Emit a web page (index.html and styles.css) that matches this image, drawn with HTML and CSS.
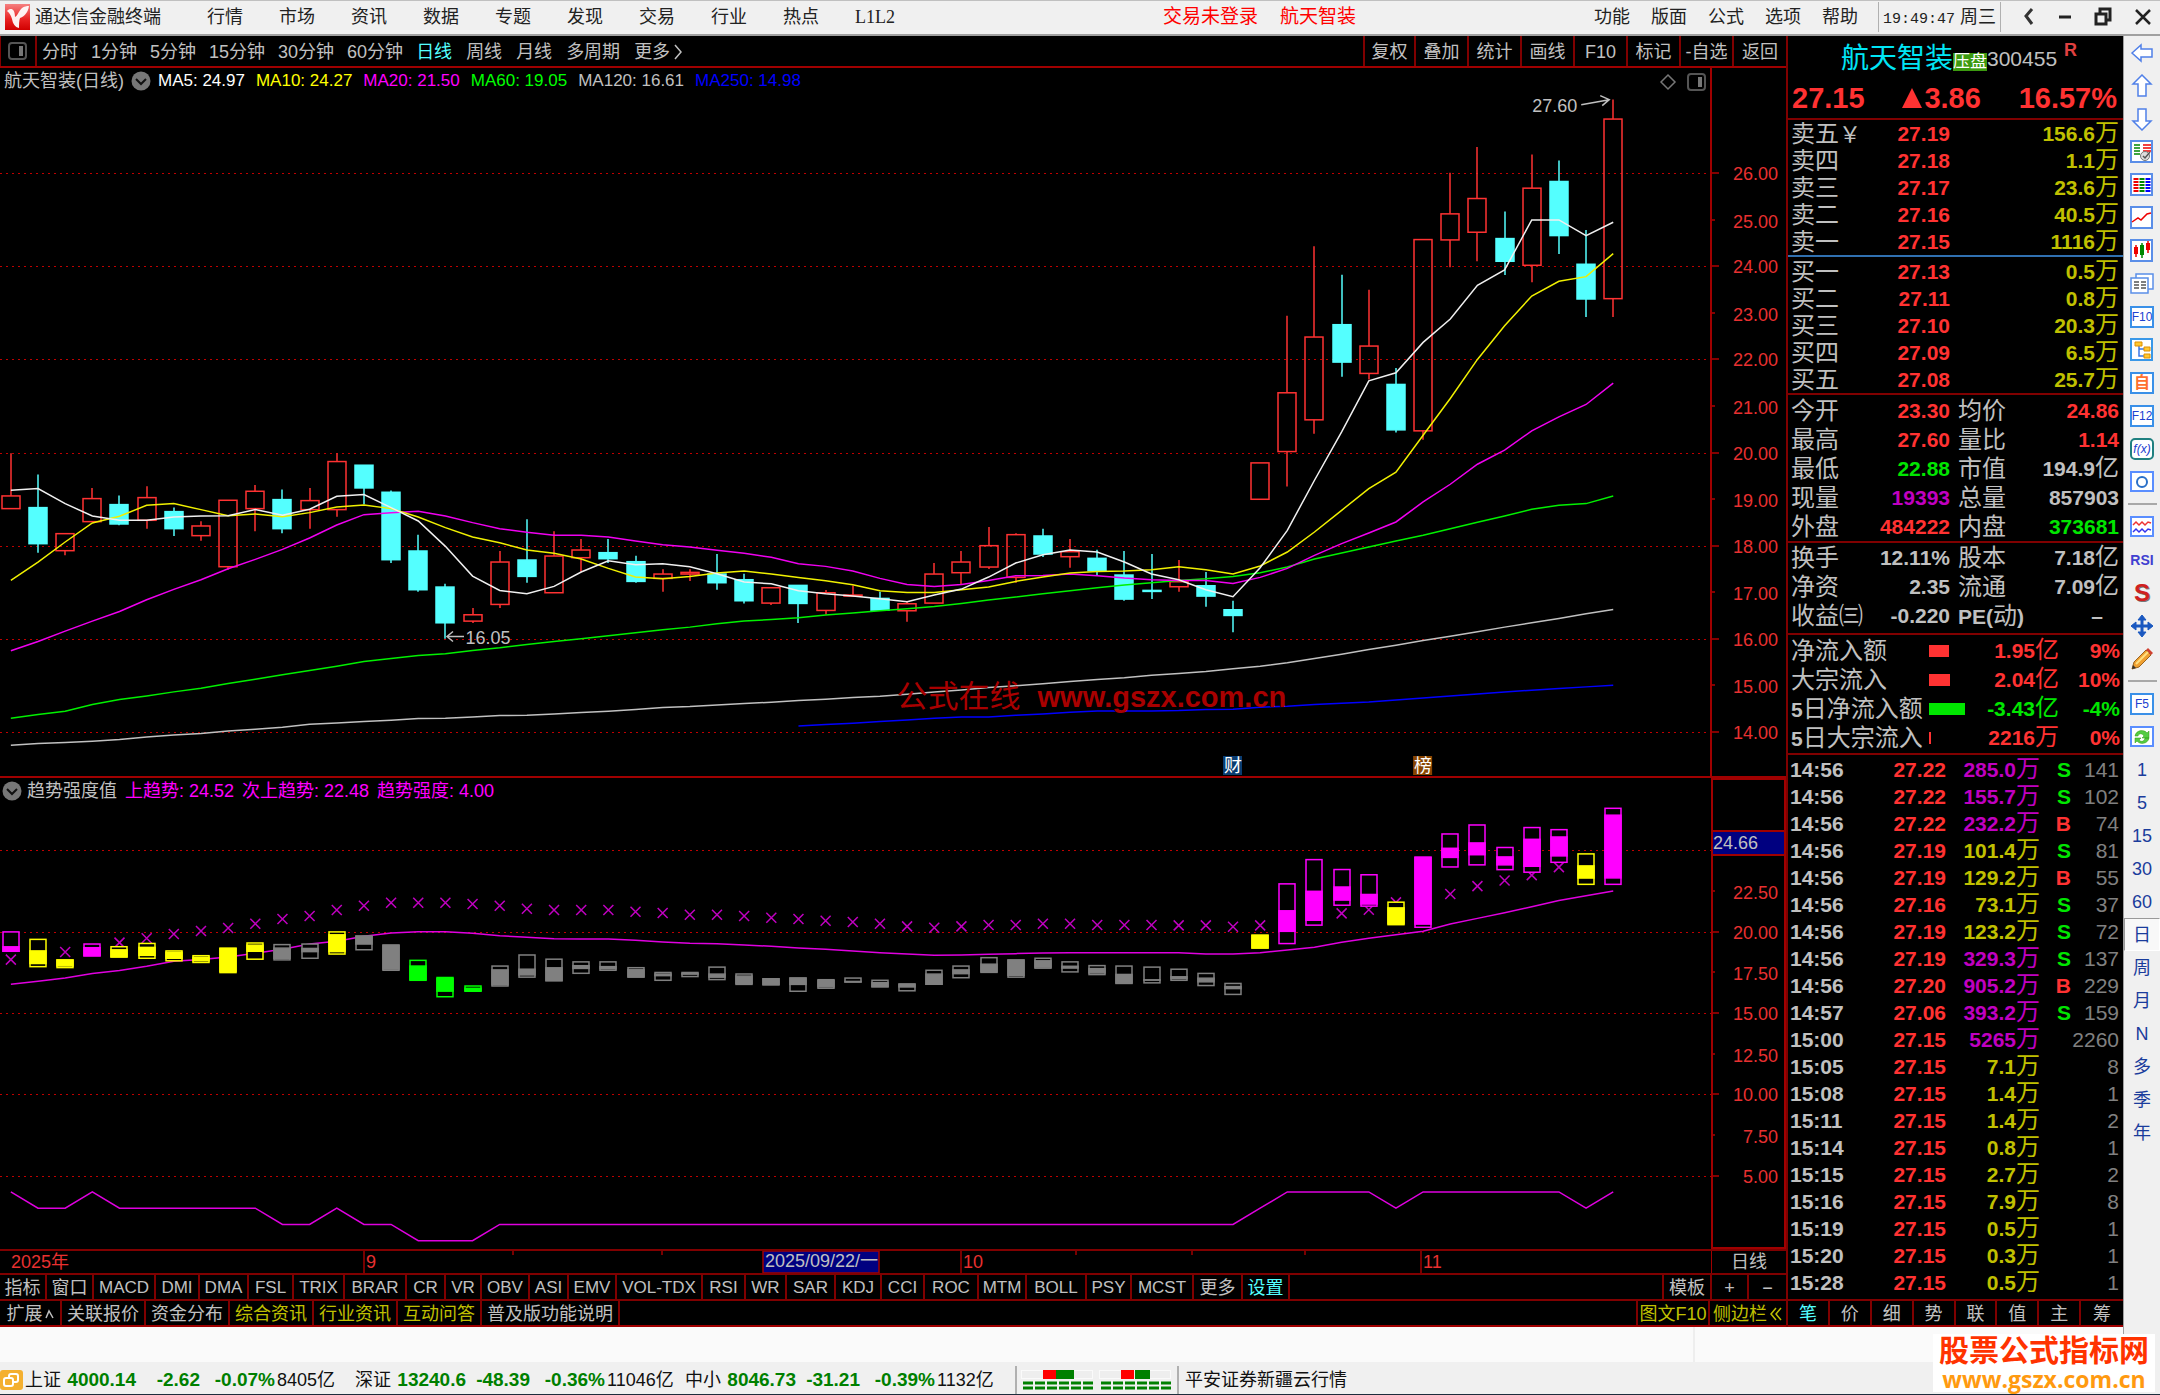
FILE: index.html
```html
<!DOCTYPE html>
<html lang="zh-CN">
<head>
<meta charset="utf-8">
<title>通达信金融终端</title>
<link rel="stylesheet" href="styles.css">
</head>
<body>
<header class="titlebar">
  <svg class="brand" viewBox="0 0 25 26" width="25" height="26"><defs><linearGradient id="lg" x1="0" y1="0" x2="0" y2="1"><stop offset="0" stop-color="#f58080"/><stop offset=".6" stop-color="#e82020"/><stop offset="1" stop-color="#d00000"/></linearGradient></defs><rect width="25" height="26" fill="url(#lg)"/><path d="M2 7c4-4 8-2 8 6 2-1 3-4 6-8 3-3 6-3 8-3-1 6-4 10-9 12-1 3-1 6-1 10-4-1-6-4-7-9C6 12 5 9 2 7z" fill="#fff" fill-opacity=".93"/></svg>
  <strong class="app-name">通达信金融终端</strong>
  <nav class="menu"><a href="#">行情</a><a href="#">市场</a><a href="#">资讯</a><a href="#">数据</a><a href="#">专题</a><a href="#">发现</a><a href="#">交易</a><a href="#">行业</a><a href="#">热点</a><a href="#">L1L2</a></nav>
  <div class="login"><a href="#">交易未登录</a><a href="#">航天智装</a></div>
  <nav class="menu tools"><a href="#">功能</a><a href="#">版面</a><a href="#">公式</a><a href="#">选项</a><a href="#">帮助</a></nav>
  <time class="clock"><span>19:49:47</span> 周三</time>
  <div class="window-buttons">
    <button aria-label="后退"><svg width="14" height="20"><path d="M10 2 4 9l6 8" fill="none" stroke="#333" stroke-width="3"/></svg></button>
    <button aria-label="最小化"><svg width="14" height="20"><path d="M1 10h12" stroke="#222" stroke-width="3"/></svg></button>
    <button aria-label="还原"><svg width="18" height="20"><path d="M6 6V2h10v11h-4M2 7h10v10H2z" fill="none" stroke="#222" stroke-width="3"/></svg></button>
    <button aria-label="关闭"><svg width="18" height="20"><path d="M2 3l14 14M16 3 2 17" stroke="#222" stroke-width="2.5"/></svg></button>
  </div>
</header>

<div class="stage">
<div class="desk-column">
<div class="desk">
<main class="charts">
  <div class="toolbar">
    <button class="panel-toggle" aria-label="侧栏"><svg width="20" height="18"><rect x="1" y="1" width="17" height="16" rx="3" fill="none" stroke="#555" stroke-width="2"/><rect x="11" y="4" width="4" height="10" fill="#777"/></svg></button>
    <nav class="minutes"><a href="#">分时</a><a href="#">1分钟</a><a href="#">5分钟</a><a href="#">15分钟</a><a href="#">30分钟</a><a href="#">60分钟</a></nav>
    <nav class="periods"><a href="#" class="on">日线</a><a href="#">周线</a><a href="#">月线</a><a href="#">多周期</a><a href="#">更多<svg width="10" height="18"><path d="M2 2l6 7-6 7" fill="none" stroke="#c0c0c0" stroke-width="1.5"/></svg></a></nav>
    <div class="actions"><button>复权</button><button>叠加</button><button>统计</button><button>画线</button><button>F10</button><button>标记</button><button>-自选</button><button>返回</button></div>
  </div>

  <section class="pane price-pane">
    <svg id="price-chart" class="plot"></svg>
    <div class="legend ma-legend">
      <span>航天智装(日线)</span>
      <svg width="20" height="20"><circle cx="10" cy="10" r="9.5" fill="#777"/><path d="M5 8l5 5 5-5" fill="none" stroke="#111" stroke-width="2"/></svg>
      <span class="ma white">MA5: 24.97</span><span class="ma yellow">MA10: 24.27</span><span class="ma magenta">MA20: 21.50</span><span class="ma green">MA60: 19.05</span><span class="ma">MA120: 16.61</span><span class="ma blue">MA250: 14.98</span>
    </div>
    <div class="corner"><svg width="18" height="18"><path d="M9 2l7 7-7 7-7-7z" fill="none" stroke="#777" stroke-width="1.5"/></svg><svg width="20" height="18"><rect x="1" y="1" width="17" height="16" rx="3" fill="none" stroke="#555" stroke-width="2"/><rect x="11" y="4" width="4" height="10" fill="#777"/></svg></div>
    <div class="watermark"><span>公式在线</span><b>www.gszx.com.cn</b></div>
  </section>

  <section class="pane trend-pane">
    <svg id="trend-chart" class="plot"></svg>
    <div class="legend trend-legend">
      <svg width="20" height="20"><circle cx="10" cy="10" r="9.5" fill="#777"/><path d="M5 8l5 5 5-5" fill="none" stroke="#111" stroke-width="2"/></svg>
      <span>趋势强度值</span><span class="magenta">上趋势: 24.52</span><span class="magenta">次上趋势: 22.48</span><span class="magenta">趋势强度: 4.00</span>
    </div>
    <div class="axis-box"><output>24.66</output></div>
  </section>

  <div class="date-axis"><svg id="dates"></svg><span>日线</span></div>

  <div class="tabs indicators">
    <div class="indicator-list"><button>指标</button><button>窗口</button><button>MACD</button><button>DMI</button><button>DMA</button><button>FSL</button><button>TRIX</button><button>BRAR</button><button>CR</button><button>VR</button><button>OBV</button><button>ASI</button><button>EMV</button><button>VOL-TDX</button><button>RSI</button><button>WR</button><button>SAR</button><button>KDJ</button><button>CCI</button><button>ROC</button><button>MTM</button><button>BOLL</button><button>PSY</button><button>MCST</button><button>更多</button><button class="cyan">设置</button></div>
    <div class="zoomers"><button>模板</button><button>+</button><button>−</button></div>
  </div>
  <div class="tabs extras">
    <div class="extra-list"><button>扩展<svg width="9" height="12"><path d="M1 10 4 3l4 7" fill="none" stroke="#c0c0c0" stroke-width="1.5"/></svg></button><button>关联报价</button><button>资金分布</button><button class="gold">综合资讯</button><button class="gold">行业资讯</button><button class="gold">互动问答</button><button>普及版功能说明</button></div>
    <div class="side-list"><button class="gold">图文F10</button><button class="gold">侧边栏<svg width="14" height="16"><path d="M7 2 2 8l5 6M12 2 7 8l5 6" fill="none" stroke="#c0c000" stroke-width="1.5"/></svg></button></div>
  </div>
</main>

<aside class="quote">
  <div class="quote-head">
    <h1><span class="stock">航天智装</span><span class="tag">压盘</span><span class="code">300455</span><sup>R</sup></h1>
    <div class="last"><span>27.15</span><span class="change"><svg width="21" height="20"><path d="M10 0l10 20H0z" fill="#ff3232"/></svg>3.86</span><span>16.57%</span></div>
  </div>
  <table class="book sell">
    <tr><th>卖五<i>￥</i></th><td class="up">27.19</td><td class="gold">156.6<i>万</i></td></tr>
    <tr><th>卖四</th><td class="up">27.18</td><td class="gold">1.1<i>万</i></td></tr>
    <tr><th>卖三</th><td class="up">27.17</td><td class="gold">23.6<i>万</i></td></tr>
    <tr><th>卖二</th><td class="up">27.16</td><td class="gold">40.5<i>万</i></td></tr>
    <tr><th>卖一</th><td class="up">27.15</td><td class="gold">1116<i>万</i></td></tr>
  </table>
  <table class="book buy">
    <tr><th>买一</th><td class="up">27.13</td><td class="gold">0.5<i>万</i></td></tr>
    <tr><th>买二</th><td class="up">27.11</td><td class="gold">0.8<i>万</i></td></tr>
    <tr><th>买三</th><td class="up">27.10</td><td class="gold">20.3<i>万</i></td></tr>
    <tr><th>买四</th><td class="up">27.09</td><td class="gold">6.5<i>万</i></td></tr>
    <tr><th>买五</th><td class="up">27.08</td><td class="gold">25.7<i>万</i></td></tr>
  </table>
  <table class="stats">
    <tr><th>今开</th><td class="up">23.30</td><th>均价</th><td class="up">24.86</td></tr>
    <tr><th>最高</th><td class="up">27.60</td><th>量比</th><td class="up">1.14</td></tr>
    <tr><th>最低</th><td class="down">22.88</td><th>市值</th><td>194.9<i>亿</i></td></tr>
    <tr><th>现量</th><td class="purple">19393</td><th>总量</th><td>857903</td></tr>
    <tr><th>外盘</th><td class="up">484222</td><th>内盘</th><td class="down">373681</td></tr>
  </table>
  <table class="stats ratios">
    <tr><th>换手</th><td>12.11%</td><th>股本</th><td>7.18<i>亿</i></td></tr>
    <tr><th>净资</th><td>2.35</td><th>流通</th><td>7.09<i>亿</i></td></tr>
    <tr><th>收益㈢</th><td>-0.220</td><th><b>PE(</b>动<b>)</b></th><td class="none">–</td></tr>
  </table>
  <table class="flows">
    <tr><th>净流入额</th><td><span class="bar" style="width:20px"></span></td><td class="up">1.95<i>亿</i></td><td class="up">9%</td></tr>
    <tr><th>大宗流入</th><td><span class="bar" style="width:21px"></span></td><td class="up">2.04<i>亿</i></td><td class="up">10%</td></tr>
    <tr><th><b>5</b>日净流入额</th><td><span class="bar out" style="width:36px"></span></td><td class="down">-3.43<i>亿</i></td><td class="down">-4%</td></tr>
    <tr><th><b>5</b>日大宗流入</th><td><span class="bar" style="width:2px"></span></td><td class="up">2216<i>万</i></td><td class="up">0%</td></tr>
  </table>
  <table class="ticks">
    <tr><td>14:56</td><td>27.22</td><td class="purple">285.0<i>万</i></td><td class="down">S</td><td>141</td></tr>
    <tr><td>14:56</td><td>27.22</td><td class="purple">155.7<i>万</i></td><td class="down">S</td><td>102</td></tr>
    <tr><td>14:56</td><td>27.22</td><td class="purple">232.2<i>万</i></td><td class="up">B</td><td>74</td></tr>
    <tr><td>14:56</td><td>27.19</td><td class="gold">101.4<i>万</i></td><td class="down">S</td><td>81</td></tr>
    <tr><td>14:56</td><td>27.19</td><td class="gold">129.2<i>万</i></td><td class="up">B</td><td>55</td></tr>
    <tr><td>14:56</td><td>27.16</td><td class="gold">73.1<i>万</i></td><td class="down">S</td><td>37</td></tr>
    <tr><td>14:56</td><td>27.19</td><td class="gold">123.2<i>万</i></td><td class="down">S</td><td>72</td></tr>
    <tr><td>14:56</td><td>27.19</td><td class="purple">329.3<i>万</i></td><td class="down">S</td><td>137</td></tr>
    <tr><td>14:56</td><td>27.20</td><td class="purple">905.2<i>万</i></td><td class="up">B</td><td>229</td></tr>
    <tr><td>14:57</td><td>27.06</td><td class="purple">393.2<i>万</i></td><td class="down">S</td><td>159</td></tr>
    <tr><td>15:00</td><td>27.15</td><td class="purple">5265<i>万</i></td><td></td><td>2260</td></tr>
    <tr><td>15:05</td><td>27.15</td><td class="gold">7.1<i>万</i></td><td></td><td>8</td></tr>
    <tr><td>15:08</td><td>27.15</td><td class="gold">1.4<i>万</i></td><td></td><td>1</td></tr>
    <tr><td>15:11</td><td>27.15</td><td class="gold">1.4<i>万</i></td><td></td><td>2</td></tr>
    <tr><td>15:14</td><td>27.15</td><td class="gold">0.8<i>万</i></td><td></td><td>1</td></tr>
    <tr><td>15:15</td><td>27.15</td><td class="gold">2.7<i>万</i></td><td></td><td>2</td></tr>
    <tr><td>15:16</td><td>27.15</td><td class="gold">7.9<i>万</i></td><td></td><td>8</td></tr>
    <tr><td>15:19</td><td>27.15</td><td class="gold">0.5<i>万</i></td><td></td><td>1</td></tr>
    <tr><td>15:20</td><td>27.15</td><td class="gold">0.3<i>万</i></td><td></td><td>1</td></tr>
    <tr><td>15:28</td><td>27.15</td><td class="gold">0.5<i>万</i></td><td></td><td>1</td></tr>
  </table>
  <div class="tabs quote-tabs"><button class="cyan">笔</button><button>价</button><button>细</button><button>势</button><button>联</button><button>值</button><button>主</button><button>筹</button></div>
</aside>
</div>
<div class="notice"><span></span></div>
</div>

<nav class="rail">
  <button aria-label="左"><svg viewBox="0 0 24 24"><path d="M2 12 11 4v4h11v8H11v4z" fill="#fff" stroke="#5080e8" stroke-width="1.5"/></svg></button>
  <button aria-label="上"><svg viewBox="0 0 24 24"><path d="M12 1l9 9h-5v12H8V10H3z" fill="#fff" stroke="#5080e8" stroke-width="1.5"/></svg></button>
  <button aria-label="下"><svg viewBox="0 0 24 24"><path d="M12 23l9-9h-5V2H8v12H3z" fill="#fff" stroke="#5080e8" stroke-width="1.5"/></svg></button>
  <button aria-label="报价"><svg viewBox="0 0 24 24"><rect x="1" y="1" width="21" height="21" fill="#fff" stroke="#5a8ee8" stroke-width="2"/><path d="M4 5h6M4 8h6M4 11h6M4 14h6" stroke="#080" stroke-width="1.5"/><path d="M13 5h8M13 8h8M13 11h8" stroke="#e00" stroke-width="1.5"/><circle cx="15" cy="16" r="4.5" fill="#ddd" stroke="#777"/><path d="M13 16l2 2 5-6" fill="none" stroke="#555" stroke-width="1.5"/></svg></button>
  <button aria-label="列表"><svg viewBox="0 0 24 24"><rect x="1" y="1" width="21" height="21" fill="#fff" stroke="#5a8ee8" stroke-width="2"/><g stroke-width="5" stroke-dasharray="2 1"><path d="M6 5v14" stroke="#e00"/><path d="M12 5v14" stroke="#080"/><path d="M18 5v14" stroke="#00f"/></g></svg></button>
  <button aria-label="走势"><svg viewBox="0 0 24 24"><rect x="1" y="1" width="21" height="21" fill="#fff" stroke="#5a8ee8" stroke-width="2"/><path d="M2 16l6-4 3 2 6-6 4-1" fill="none" stroke="#e00" stroke-width="1.5"/></svg></button>
  <button aria-label="K线"><svg viewBox="0 0 24 24"><rect x="1" y="1" width="21" height="21" fill="#fff" stroke="#5a8ee8" stroke-width="2"/><path d="M6 6v12M18 2v12" stroke="#e00" stroke-width="1.5"/><path d="M12 4v15" stroke="#080" stroke-width="1.5"/><path d="M4 8h4v7H4zM16 4h4v7h-4z" fill="#e00"/><path d="M10 6h4v10h-4z" fill="#080"/></svg></button>
  <button aria-label="资讯"><svg viewBox="0 0 24 24"><rect x="6" y="2" width="17" height="15" fill="#fff" stroke="#5a8ee8" stroke-width="1.5"/><rect x="1" y="6" width="17" height="15" fill="#fff" stroke="#5a8ee8" stroke-width="1.5"/><path d="M4 10h5M4 13h5M4 16h5M11 10h5M11 13h5M11 16h5" stroke="#555" stroke-width="1.5"/></svg></button>
  <button class="key"><span>F10</span></button>
  <button aria-label="板块"><svg viewBox="0 0 24 24"><rect x="1" y="1" width="21" height="21" fill="#fff" stroke="#3a98e8" stroke-width="2"/><path d="M9 7v11h5M9 11h5" fill="none" stroke="#3a78e8" stroke-width="1.5"/><path d="M5 4h7v4H5zM14 9h6v4h-6zM14 16h6v4h-6z" fill="#ffc830" stroke="#e09000"/></svg></button>
  <button class="key self"><span>自</span></button>
  <button class="key"><span>F12</span></button>
  <button class="key fx"><span>f(x)</span></button>
  <button aria-label="圆"><svg viewBox="0 0 24 24"><rect x="1" y="2" width="22" height="19" fill="#fff" stroke="#5a8eff" stroke-width="2"/><circle cx="12" cy="12" r="5" fill="none" stroke="#2a70c8" stroke-width="2"/></svg></button>
  <hr>
  <button aria-label="多指标"><svg viewBox="0 0 24 24"><rect x="1" y="2" width="22" height="19" fill="#fff" stroke="#5a8eff" stroke-width="2"/><path d="M3 10l3-3 3 3 3-3 3 3 3-3 3 1" fill="none" stroke="#e33" stroke-width="1.5"/><path d="M3 17l3-3 3 3 3-3 3 3 3-3 3 1" fill="none" stroke="#33e" stroke-width="1.5"/></svg></button>
  <button class="rsi">RSI</button>
  <button class="money">S</button>
  <button aria-label="移动"><svg viewBox="0 0 24 24"><path d="M12 1l4 5h-3v5h5V8l5 4-5 4v-3h-5v5h3l-4 5-4-5h3v-5H6v3l-5-4 5-4v3h5V6H8z" fill="#1a58c0" stroke="#1a58c0"/></svg></button>
  <button aria-label="画笔"><svg viewBox="0 0 24 24"><path d="M2 22l2-7L16 3l5 5L9 20z" fill="#f0a030" stroke="#9a6420"/><path d="M16 3l2-2 5 5-2 2z" fill="#d04030"/><path d="M6 17 18 5" stroke="#ffe080" stroke-width="2"/><path d="M2 22l1-4 3 3z" fill="#333"/></svg></button>
  <hr>
  <button class="key"><span>F5</span></button>
  <button aria-label="刷新"><svg viewBox="0 0 24 24"><rect x="1" y="2" width="22" height="19" fill="#fff" stroke="#5a8eff" stroke-width="2"/><path d="M5 11c1-6 9-7 12-3l2-2v7h-7l2-2c-2-3-5-3-6 0zM19 13c-1 6-9 7-12 3l-2 2v-5h6l-2 2c2 2 5 2 6-2z" fill="#5c4" stroke="#391" stroke-width=".5"/></svg></button>
  <button>1</button><button>5</button><button>15</button><button>30</button><button>60</button>
  <button class="pressed">日</button><button>周</button><button>月</button><button>N</button><button>多</button><button>季</button><button>年</button>
</nav>
</div>

<footer class="status">
  <svg class="link-icon" width="23" height="20"><rect width="23" height="20" rx="3" fill="#f4b030"/><rect x="9" y="4" width="9" height="8" rx="2" fill="none" stroke="#fff" stroke-width="2"/><rect x="4" y="8" width="9" height="8" rx="2" fill="#f4b030" stroke="#fff" stroke-width="2"/></svg>
  <div class="index"><span>上证</span><b>4000.14</b><b>-2.62</b><b>-0.07%</b><span>8405亿</span></div>
  <div class="index"><span>深证</span><b>13240.6</b><b>-48.39</b><b>-0.36%</b><span>11046亿</span></div>
  <div class="index"><span>中小</span><b>8046.73</b><b>-31.21</b><b>-0.39%</b><span>1132亿</span></div>
  <div class="meters">
    <svg width="73" height="20"><path d="M0 0h72v9H0z" fill="#fafafa"/><path d="M1 1h70v7H1z" fill="#eee"/><path d="M22 0h13v9H22z" fill="#f00"/><path d="M35 0h18v9H35z" fill="#008000"/><path d="M2 13h71M2 18h71" stroke="#008000" stroke-width="3" stroke-dasharray="10 2"/></svg>
    <svg width="73" height="20"><path d="M0 0h72v9H0z" fill="#fafafa"/><path d="M1 1h70v7H1z" fill="#eee"/><path d="M22 0h13v9H22z" fill="#f00"/><path d="M36 0h15v9H36z" fill="#008000"/><path d="M2 13h71M2 18h71" stroke="#008000" stroke-width="3" stroke-dasharray="10 2"/></svg>
  </div>
  <span class="server">平安证券新疆云行情</span>
  <a class="site-badge" href="#"><strong>股票公式指标网</strong><span>www.gszx.com.cn</span></a>
</footer>
<script src="chart.js"></script>
</body>
</html>
```
FILE: styles.css
```css
* { box-sizing: border-box; }
body {
  margin: 0;
  min-height: 100vh;
  display: flex;
  flex-direction: column;
  background: #f0f0f0;
  border-bottom: 1px solid #1c2c3c;
  font: 18px/22px "Liberation Sans", "Noto Sans CJK SC", sans-serif;
  color: #222;
  overflow-x: hidden;
}
a { color: inherit; text-decoration: none; white-space: nowrap; }
button {
  font: inherit;
  color: inherit;
  background: none;
  border: 0;
  padding: 0;
  margin: 0;
  white-space: nowrap;
}
svg { flex: none; display: block; }
i { font-style: normal; }

/* title bar */
.titlebar {
  height: 36px;
  flex: none;
  display: flex;
  align-items: center;
  padding: 0 8px 1px 5px;
  border-top: 1px solid #c0c0c0;
  border-bottom: 2px solid #a0a0a0;
}
.app-name { font-weight: 400; margin: 0 46px 0 5px; }
.menu { display: flex; gap: 36px; font-family: "Liberation Serif", "Noto Sans CJK SC", serif; }
.login { display: flex; gap: 22px; margin-left: auto; color: #f00; font-size: 19px; }
.tools { gap: 21px; margin-left: 238px; }
.clock {
  margin-left: 20px;
  padding: 4px 4px 4px 4px;
  border: solid #b0b0b0;
  border-width: 0 1px;
}
.clock span { font: 15px "Liberation Mono", monospace; }
.window-buttons { display: flex; gap: 22px; margin-left: 21px; }

/* page frame */
.stage { flex: 1; display: grid; grid-template-columns: minmax(0, 1fr) 37px; }
.desk-column { display: flex; flex-direction: column; min-width: 0; }
.desk {
  flex: 1;
  display: grid;
  grid-template-columns: minmax(0, 1fr) 337px;
  background: #000;
  color: #c0c0c0;
}
.notice { height: 35px; background: #fafafa; display: flex; justify-content: flex-end; }
.notice span { width: 430px; border-left: 2px solid #eee; }

/* charts */
.charts { display: flex; flex-direction: column; min-width: 0; }
.toolbar {
  height: 32px;
  flex: none;
  display: flex;
  align-items: center;
  border-bottom: 2px solid #a00000;
}
.toolbar nav, .actions button { padding-top: 1px; }
.panel-toggle { align-self: stretch; padding: 0 7px; border: solid #800000; border-width: 0 2px 0 1px; margin-right: 5px; }
.minutes { display: flex; gap: 13px; margin-right: 13px; }
.periods { display: flex; gap: 14px; }
.periods svg { display: inline-block; vertical-align: -3px; margin-left: 3px; }
.on, .cyan { color: #54ffff; }
.actions {
  display: grid;
  grid-template-columns: 51px repeat(6, 53px) 54px;
  align-self: stretch;
  margin-left: auto;
}
.actions button { border-left: 2px solid #800000; }

.pane { position: relative; min-height: 0; }
.price-pane { flex: 709; border-bottom: 2px solid #a00000; }
.trend-pane { flex: 472; }
.plot { position: absolute; width: 100%; height: 100%; }
.legend {
  position: absolute;
  top: 2px;
  left: 4px;
  display: flex;
  align-items: center;
  white-space: nowrap;
}
.ma-legend { gap: 7px; }
.ma-legend .ma { font-size: 17px; margin-right: 4px; }
.trend-legend { left: 2px; gap: 8px; }
.trend-legend svg { margin-right: -3px; }
.white { color: #fff; }
.yellow { color: #ff0; }
.magenta { color: #f0f; }
.green { color: #0f0; }
.blue { color: #00f; }
.gold { color: #c0c000; }
.corner { position: absolute; top: 5px; right: 79px; display: flex; gap: 10px; }
.watermark {
  position: absolute;
  left: 50.2%;
  bottom: 62px;
  display: flex;
  align-items: center;
  gap: 17px;
  color: #a80000;
  font-size: 29px;
  line-height: 34px;
}
.watermark span { font-size: 31px; }
.axis-box {
  position: absolute;
  top: 0;
  right: 0;
  width: 75px;
  height: 100%;
  border: 2px solid #a00000;
}
.axis-box output {
  display: block;
  margin-top: 50px;
  border: solid #a00000;
  border-width: 2px 0;
  background: #000080;
  line-height: 22px;
}
.date-axis {
  height: 24px;
  flex: none;
  display: flex;
  border-top: 2px solid #800000;
}
.date-axis svg { flex: 1; height: 22px; min-width: 0; }
.date-axis span { width: 75px; text-align: center; border-left: 1px solid #a00000; }

.tabs { display: flex; justify-content: space-between; border-top: 2px solid #800000; flex: none; }
.tabs button { border-right: 2px solid #800000; padding-top: 1px; }
.indicators { height: 26px; font-size: 17px; }
.indicator-list {
  display: grid;
  grid-template-columns: 47px 47px 62px 44px 49px 45px 51px 62px 39px 36px 48px 39px 48px 86px 43px 41px 49px 46px 43px 54px 48px 60px 45px 62px 49px 47px;
}
.indicator-list button:first-child, .indicator-list button:nth-child(2),
.indicator-list button:nth-last-child(-n+2), .zoomers button { font-size: 18px; }
.zoomers { display: grid; grid-template-columns: 48px 37px 37px; border-left: 2px solid #800000; }
.zoomers button:last-child, .side-list button:last-child { border-right: 0; }
.extras { height: 28px; border-bottom: 2px solid #a00000; }
.extra-list { display: grid; grid-template-columns: 62px repeat(5, 84px) 138px; }
.extra-list svg { display: inline-block; margin-left: 2px; }
.side-list { display: grid; grid-template-columns: 72px 76px; border-left: 2px solid #800000; }
.side-list svg { display: inline-block; vertical-align: -2px; margin-left: 2px; }

/* quote panel */
.quote {
  display: flex;
  flex-direction: column;
  border-left: 2px solid #800000;
  font-size: 21px;
}
.quote-head { height: 84px; border-bottom: 2px solid #800000; padding: 4px 6px 0 4px; }
h1 { margin: 0; font-size: 28px; font-weight: 400; height: 38px; line-height: 38px; display: flex; padding-left: 49px; }
.stock { color: #00e5f5; }
.tag { align-self: flex-end; background: #3c9a10; color: #fff; font-size: 17px; line-height: 18px; margin-bottom: 7px; }
.code { font-size: 21px; line-height: 38px; }
sup { font-size: 18px; line-height: 18px; font-weight: 700; color: #e04040; margin: 1px 0 0 7px; }
.last { display: flex; justify-content: space-between; font-size: 29px; line-height: 40px; font-weight: 700; color: #ff3232; }
.change svg { display: inline-block; margin-right: 1px; }
table { width: 100%; table-layout: fixed; }
th, td { padding: 0; height: 27px; line-height: 26px; overflow: visible; white-space: nowrap; }
th { text-align: left; font-weight: 400; font-size: 24px; padding-left: 3px; }
th b { font-size: 21px; line-height: 1; }
td { text-align: right; font-weight: 700; }
i { font-size: 24px; font-weight: 400; line-height: 1; }
th i { font-size: 22px; }
.up { color: #ff3232; }
.down { color: #00e600; }
.purple { color: #c000c0; }
.quote table { border-bottom: 2px solid #800000; border-collapse: separate; border-spacing: 0; flex: none; }
.book th { width: 90px; }
.book td:nth-child(2) { width: 72px; }
.book td:last-child { padding-right: 4px; }
.quote .sell { border-color: #3070b0; }
.buy { padding-top: 1px; }
.stats td, .stats th, .flows td, .flows th { height: 29px; line-height: 28px; }
.stats { padding-top: 1px; }
.stats th { width: 72px; }
.stats td:nth-child(2) { width: 90px; }
.stats th:nth-child(3) { padding-left: 8px; }
.stats td:last-child { padding-right: 4px; }
.stats td.none { padding-right: 20px; }
.ratios { padding: 0 0 3px; }
.flows th { width: 141px; }
.flows { padding: 1px 0; }
.flows td:nth-child(2) { width: 40px; text-align: left; }
.flows td:nth-child(3) { width: 90px; }
.flows td:last-child { padding-right: 3px; }
.bar { display: block; height: 12px; background: #ff3232; }
.bar.out { background: #00e600; }
.ticks td:nth-child(1) { width: 79px; text-align: left; padding-left: 2px; }
.ticks td:nth-child(2) { width: 79px; color: #ff3232; }
.ticks td:nth-child(3) { width: 94px; }
.ticks td:nth-child(4) { width: 31px; }
.ticks td:nth-child(5) { color: #808080; padding-right: 4px; font-weight: 400; }
.quote .ticks { border-bottom: 0; padding-top: 1px; }
.quote-tabs { margin-top: auto; height: 28px; display: grid; grid-template-columns: repeat(8, 1fr); border-bottom: 2px solid #a00000; font-size: 18px; }
.quote-tabs button:last-child { border-right: 0; }

/* shortcut rail */
.rail {
  display: flex;
  flex-direction: column;
  border-left: 1px solid #a0a0a0;
  color: #1a3c9c;
}
.rail button { height: 33px; display: flex; align-items: center; justify-content: center; }
.rail svg { width: 24px; height: 24px; }
.rail hr { width: 29px; margin: 5px auto; border: 0; border-top: 2px solid #a8a8a8; }
.rail .key span { width: 24px; height: 22px; border: 2px solid #3a90e8; background: #fff; color: #2040d0; font-size: 12px; line-height: 18px; display: flex; justify-content: center; }
.rail .self span { color: #ff7030; font-size: 16px; font-weight: 700; }
.rail .fx span { border-color: #208080; border-radius: 5px; font-style: italic; }
.rail .rsi { font-size: 14px; font-weight: 700; color: #4040d0; }
.rail .money { font-size: 24px; font-weight: 700; color: #d02020; text-shadow: 1px 1px #777; }
.rail .pressed { border: 1px solid #fff; border-top-color: #999; border-left-color: #999; background: #f8f8f8; }

/* status bar */
.status { height: 32px; flex: none; position: relative; display: flex; align-items: center; padding-top: 4px; white-space: nowrap; color: #111; }
.link-icon { margin-right: 2px; }
.index { display: grid; grid-template-columns: 36px 77px 64px 75px 78px; width: 330px; flex: none; }
.index b { color: #008000; font-size: 19px; text-align: right; padding-right: 2px; }
.meters { display: flex; gap: 5px; padding: 4px 5px 4px 4px; border: solid #b0b0b0; border-width: 0 2px; }
.server { margin-left: 6px; }
.site-badge {
  position: absolute;
  right: 5px;
  bottom: 2px;
  width: 222px;
  height: 58px;
  background: #fff;
  display: flex;
  flex-direction: column;
  align-items: center;
  color: #ff3300;
  font-size: 30px;
  line-height: 34px;
}
.site-badge span { font: 700 23px/22px "Open Sans", sans-serif; color: #ff9a10; }
```
FILE: chart.js
```js
// Bars: [high, body top, body bottom, low, rising]. Levels count down the
// price axis in steps of 1/139.5 yuan; each group names the level of 20.00.
const groups = [
  { twenty: 97, bars: [
    [99,227,265,265,1],[163,262,370,397,0],[340,340,391,405,1],[203,235,304,304,1],
    [226,253,311,315,0],[198,232,300,325,1],[262,274,325,347,0],[303,317,346,361,1],
    [240,240,439,448,1],[194,213,265,333,1],[208,238,325,339,0],[203,241,268,325,1],
    [99,124,268,289,1],[135,135,203,252,0],[211,216,418,428,0],[343,392,508,514,0],
    [490,500,607,655,0],[563,583,602,608,1],[392,425,552,563,1],[297,419,468,487,0],
    [333,407,517,517,1],[356,389,412,454,1],[356,397,415,428,0],[406,424,483,487,0],
    [447,461,474,514,1],[447,456,461,482,1],[401,461,487,508,0],[460,478,541,549,0],
    [501,502,548,554,1],[495,495,549,608,0],[509,517,570,582,1],[495,524,527,529,1],
    [514,534,569,569,0],[545,550,571,604,1],[428,461,548,548,1],[392,425,457,492,1],
    [320,376,440,446,1],[339,343,471,487,1],[325,347,401,410,0],[356,394,409,442,1],
    [388,414,451,465,0],[392,464,536,541,0],[401,510,513,536,0],[419,484,499,514,1],
    [455,496,527,559,0],[541,568,585,635,0],[128,128,237,237,1]] },
  { twenty: 1116, bars: [
    [706,937,1113,1218,1],[498,770,1018,1060,1],[583,733,845,889,0],[628,797,879,897,1],
    [863,912,1048,1056,0],[478,478,1051,1078,1],[278,401,479,561,1],[201,355,456,543,1],
    [394,475,543,584,0],[223,324,555,606,1],[241,304,466,521,0],[449,552,656,710,0],
    [58,117,655,710,1]] }
];
const STEP = 139.5;
const bars = groups.flatMap(g => g.bars.map(b => ({
  levels: b.slice(0, 4).map(v => 20 - (v - g.twenty) / STEP), rising: b[4]
})));

// Moving averages, same level steps with 20.00 at 97.
const averages = [
  ['#c0c0c0', 0, [974,969,966,962,957,949,943,939,931,926,920,911,907,903,899,894,893,889,885,884,880,876,872,867,861,858,853,849,845,840,836,831,827,821,814,808,801,796,790,783,777,772,764,759,753,745,737,727,714,701,687,674,660,647,634,620,607,594,580,567]],
  ['#0000ff', 29, [916,912,908,903,898,893,889,889,884,880,875,871,871,871,870,867,866,860,857,852,848,844,838,832,826,820,814,809,804,799,794]],
  ['#00f000', 0, [893,882,872,852,837,826,814,803,789,776,763,750,737,723,714,705,700,690,682,672,663,655,646,637,628,620,610,602,597,592,584,578,571,565,558,549,539,530,520,511,502,494,487,480,475,468,457,440,416,398,380,362,345,325,306,287,267,255,250,227]],
  ['#f000f0', 0, [691,663,632,602,573,538,507,478,445,417,387,353,314,283,277,273,287,307,325,336,345,345,350,362,373,380,390,399,411,430,438,452,474,492,498,492,480,466,465,461,466,473,478,480,480,489,471,444,405,370,338,305,245,192,132,90,32,-10,-47,-111]],
  ['#f0f000', 0, [480,425,365,308,288,255,250,268,286,281,289,277,260,254,265,290,322,350,367,389,399,416,444,470,475,468,458,452,461,471,481,493,511,516,516,508,500,483,470,458,453,452,448,439,448,461,437,395,335,270,205,156,45,-65,-182,-283,-372,-416,-430,-499]],
  ['#f0f0f0', 0, [210,205,250,287,300,300,290,287,286,268,285,267,228,223,262,302,378,467,510,520,498,455,421,433,430,439,460,485,490,511,520,527,535,544,524,506,470,428,403,389,395,425,461,478,508,529,442,330,180,35,-118,-142,-233,-303,-404,-450,-600,-600,-553,-593]]
];

// Trend pane, levels in steps of 1/48.9 with 20.00 at 483.
const crosses = {0:567,2:544,4:516,5:503,6:490,7:481,8:472,9:459,10:445,11:436,12:418,13:405,14:396,15:396,16:396,17:400,18:405,19:414,20:418,21:418,22:418,23:423,24:427,25:432,26:432,27:436,28:441,29:445,30:450,31:454,32:459,33:467,34:471,35:467,36:463,37:463,38:459,39:459,40:463,41:463,42:463,43:464,44:464,45:468,46:464,49:428,50:417,51:395,53:370,54:346,55:329,56:313,57:289};
const trend = [641,632,622,609,600,587,572,567,559,548,536,520,512,497,487,483,483,488,495,500,504,505,505,509,514,518,519,523,527,532,536,541,546,550,554,553,551,549,547,546,546,546,546,546,550,550,546,538,530,515,503,492,482,460,443,426,408,389,375,361];
const strength = [...('433433333322322111' + '2'.repeat(28) + '34444344444434')].map(Number);
const tones = 'myymyyyyyyggyggGGG' + 'g'.repeat(28) + 'ymmmmymmmmmmym';
const palette = { m: '#ff00ff', y: '#ffff00', g: '#808080', G: '#00ff00' };

const AXIS = 75, RED = '#ff3232', CYAN = '#54ffff';
const line = (x1, y1, x2, y2, c, w = 1.5, extra = '') =>
  `<path d="M${x1} ${y1}L${x2} ${y2}" stroke="${c}" stroke-width="${w}" ${extra}/>`;
const rect = (x, y, w, h, fill, stroke = 'none') =>
  `<rect x="${x}" y="${y}" width="${w}" height="${Math.max(h, 0)}" fill="${fill}" stroke="${stroke}" stroke-width="1.5"/>`;
const text = (x, y, s, c, anchor = 'start') =>
  `<text x="${x}" y="${y}" fill="${c}" text-anchor="${anchor}">${s}</text>`;
const curve = (pts, c) =>
  `<polyline fill="none" stroke="${c}" stroke-width="1.5" points="${pts.map(p => p.join()).join(' ')}"/>`;

function scales(svg) {
  const w = svg.clientWidth - AXIS, h = svg.clientHeight;
  return { w, h, x: i => (i + 0.4) * w / 63 };
}
function grid(w, y, levels, major) {
  return levels.map(v => {
    const on = major(v), at = Math.round(y(v));
    return (on ? line(0, at + 0.5, w, at + 0.5, '#c00000', 1, 'stroke-dasharray="2 4"') : '') +
      line(w, at, w + (on ? 8 : 4), at, '#b00000') +
      text(w + 67, at + (on ? 7 : 8), v.toFixed(2), '#e83030', 'end');
  }).join('');
}

function drawPrice() {
  const svg = document.getElementById('price-chart');
  const { w, h, x } = scales(svg);
  const y = p => h * (384 - (p - 20) * 46.5) / 707;
  let out = grid(w, y, [26,25,24,23,22,21,20,19,18,17,16,15,14], v => v % 2 === 0);
  out += line(w, 0, w, h, '#a00000', 2);
  bars.forEach((b, i) => {
    const [hi, top, bottom, lo] = b.levels.map(y);
    const c = b.rising ? RED : CYAN, cx = Math.round(x(i));
    out += line(cx, hi, cx, top, c) + line(cx, bottom, cx, lo, c);
    out += rect(cx - 9, top, 18, Math.max(bottom - top, 1), b.rising ? 'none' : c, c);
  });
  averages.forEach(([c, from, levels]) => {
    out += curve(levels.map((v, k) => [x(from + k), y(20 - (v - 97) / STEP)]), c);
  });
  const low = y(16.05), last = x(59), high = y(27.6);
  out += `<path d="M464 ${low}h-17m6 -5l-6 5l6 5" fill="none" stroke="#c0c0c0" stroke-width="1.5"/>`;
  out += text(x(16) + 20, low + 8, '16.05', '#c0c0c0');
  out += `<path d="M${last - 32} ${high + 6}l28 -5m-9 -4l9 4l-7 6" fill="none" stroke="#c0c0c0" stroke-width="1.5"/>`;
  out += text(last - 36, high + 13, '27.60', '#c0c0c0', 'end');
  [[45, '财', '#0a3c70'], [52, '榜', '#884400']].forEach(([i, s, c]) => {
    out += rect(x(i) - 10, h - 20, 19, 19, c) + text(x(i) - 9, h - 4, s, '#fff');
  });
  svg.innerHTML = out;
}

function drawTrend() {
  const svg = document.getElementById('trend-chart');
  const { w, h, x } = scales(svg);
  const y = p => h * (154 - (p - 20) * 16.3) / 472;
  const at = v => y(20 - (v - 483) / 48.9);
  let out = grid(w, y, [22.5,20,17.5,15,12.5,10,7.5,5], v => v % 5 === 0);
  const top25 = Math.round(y(25)) + 0.5;
  out += line(0, top25, w, top25, '#c00000', 1, 'stroke-dasharray="2 4"');
  out += curve(trend.map((v, i) => [x(i), at(v)]), '#e000e0');
  Object.entries(crosses).forEach(([i, v]) => {
    const cx = x(+i), cy = at(v);
    out += `<path d="M${cx - 5} ${cy - 5}l10 10m0 -10l-10 10" stroke="#c000c0" stroke-width="1.5"/>`;
  });
  bars.forEach((b, i) => {
    const [hi, top, bottom, lo] = b.levels.map(y);
    const c = palette[tones[i]], cx = Math.round(x(i));
    out += rect(cx - 8, hi, 16, lo - hi, '#000', c) + rect(cx - 8, top, 16, bottom - top, c, c);
  });
  out += curve(strength.map((v, i) => [x(i), y(v)]), '#e000e0');
  svg.innerHTML = out;
}

function drawDates() {
  const svg = document.getElementById('dates');
  const w = svg.clientWidth, at = f => Math.round(f * w / 1711);
  let out = text(11, 17, '2025年', '#e83030');
  [[364, '9'], [961, '10'], [1421, '11']].forEach(([f, s]) => {
    out += line(at(f), 0, at(f), 22, '#a00000') + text(at(f) + 2, 17, s, '#e83030');
  });
  [513, 662, 1076, 1192, 1305].forEach(f => { out += line(at(f), 0, at(f), 4, '#a00000'); });
  out += rect(at(763), 0, 116, 22, '#000080', '#a00000') + text(at(763) + 2, 16, '2025/09/22/一', '#c0c0c0');
  svg.innerHTML = out;
}

function draw() { drawPrice(); drawTrend(); drawDates(); }
draw();
window.addEventListener('resize', draw);
```
